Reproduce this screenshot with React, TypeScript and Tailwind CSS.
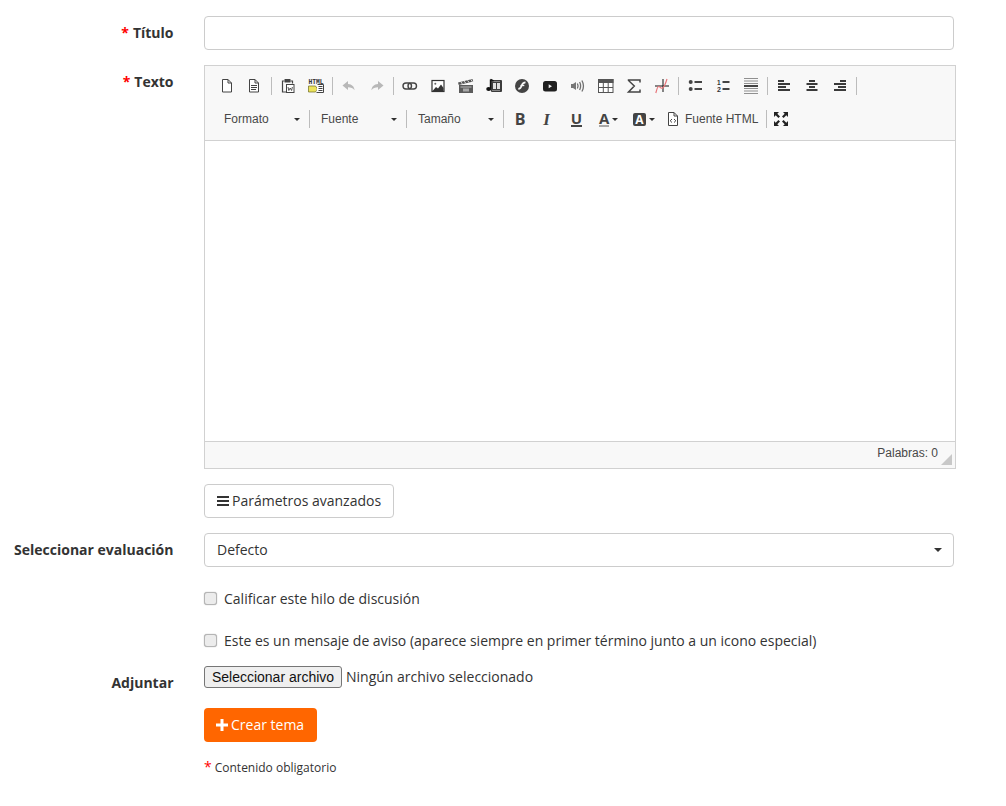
import type { ReactNode } from "react";

const sans = "font-['Open_Sans',sans-serif]";
const arial = "font-['Liberation_Sans',Arial,sans-serif]";

function Ico({ children }: { children: ReactNode }) {
  return (
    <svg width="16" height="16" viewBox="0 0 16 16" className="block overflow-visible">
      {children}
    </svg>
  );
}

function Btn({ children }: { children: ReactNode }) {
  return <div className="w-7 h-6 flex items-center justify-center shrink-0">{children}</div>;
}

function Sep() {
  return <div className="w-px h-[18px] bg-[#bcbcbc] mx-[2px] shrink-0" />;
}

function Bar({ className = "" }: { className?: string }) {
  return <div className={`w-px h-[18px] bg-[#bcbcbc] shrink-0 ${className}`} />;
}

const c = "#444";

const NewPage = () => (
  <Ico>
    <path d="M4.500 1.500h5.500l3.500 3.500v9h-9z M10 1.500v3.500h3.500" fill="#fff" stroke={c} />
  </Ico>
);
const Preview = () => (
  <Ico>
    <path d="M3.500 1.500h5.500l3.500 3.500v9h-9z M9 1.500v3.500h3.500" fill="#fff" stroke={c} />
    <path d="M5 7.500h6M5 9.500h6M5 11.500h5" stroke={c} />
  </Ico>
);
const PasteWord = () => (
  <Ico>
    <path d="M4.500 3h-2v11h4M10.500 3h2v2.500" fill="none" stroke={c} strokeWidth="1.200" />
    <rect x="4.500" y="1" width="6" height="3.500" rx=".5" fill={c} />
    <rect x="6.500" y="6.500" width="7.500" height="8" fill="#fff" stroke={c} />
    <path d="M8 9l.8 3.500L10.200 10l1.400 2.500.8-3.500" fill="none" stroke={c} strokeWidth=".9" />
  </Ico>
);
const HtmlPaste = () => (
  <Ico>
    <text x=".4" y="6" textLength="15.200" lengthAdjust="spacingAndGlyphs" fontFamily="'Liberation Mono',monospace" fontSize="7" fontWeight="700" fill="#333">HTML</text>
    <path d="M.5 8h7l2 3-2 3h-7z" fill="#ece35c" stroke="#6f6a20" strokeWidth=".7" />
    <path d="M9.500 6.500h6v8h-7" fill="#fff" stroke={c} />
    <path d="M10.500 8.500h4M10.500 10.500h4M10.500 12.500h4" stroke={c} />
  </Ico>
);
const Undo = ({ flip }: { flip?: boolean }) => (
  <svg width="16" height="16" viewBox="0 0 16 16" className={flip ? "block -scale-x-100" : "block"}>
    <path d="M7 3L1.500 7.500 7 12V9.300c3 0 5 .8 6.500 3 0-3.500-2.500-6-6.500-6.300z" fill="#b8b8b8" />
  </svg>
);
const Link = () => (
  <Ico>
    <rect x="1" y="5" width="8.500" height="6" rx="3" fill="none" stroke="#444" strokeWidth="1.400" />
    <rect x="6" y="5" width="8.500" height="6" rx="3" fill="none" stroke="#444" strokeWidth="1.400" />
  </Ico>
);
const Picture = () => (
  <Ico>
    <rect x="2" y="2.500" width="12" height="11" fill="#fff" stroke="#333" strokeWidth="1.200" />
    <circle cx="5.300" cy="5.800" r="1" fill="#666" />
    <path d="M2.500 13l3.500-4 2 1.500 3-4 2.500 3.500v3z" fill="#333" />
  </Ico>
);
const Clapper = () => (
  <Ico>
    <path d="M0 4.500l14.500-3.500.7 2.600-14.500 3.500z" fill="#555" />
    <path d="M3 4l1.500 2.200M6.300 3.200l1.500 2.200M9.600 2.400l1.500 2.200M12.900 1.600l1.500 2.200" stroke="#ddd" />
    <rect x="1" y="7" width="14" height="8" fill="#5c5c5c" />
    <path d="M2.500 9h11" stroke="#bbb" />
    <rect x="5" y="10.500" width="6" height="3" fill="#a8a8a8" />
  </Ico>
);
const Audio = () => (
  <Ico>
    <rect x="5" y="2" width="11" height="12" rx="1" fill="#3c3c3c" />
    <path d="M6.500 3.500h8M6.500 12.500h8" stroke="#ccc" strokeDasharray="1 1" />
    <rect x="7" y="5" width="3" height="6" fill="#ddd" />
    <rect x="11" y="5" width="3" height="6" fill="#ddd" />
    <path d="M4.500 1.500v9" stroke="#111" strokeWidth="1.400" />
    <path d="M4.500 1.500l3 1.500" stroke="#111" strokeWidth="1.600" />
    <ellipse cx="2.700" cy="11" rx="2.500" ry="2" fill="#111" />
  </Ico>
);
const Flash = () => (
  <Ico>
    <circle cx="8" cy="8" r="7" fill="#444" />
    <path d="M11.500 4.300c-2.800 0-3.300 1.500-3.900 3.400-.5 1.700-1.100 3-3.300 3.100" fill="none" stroke="#f8f8f8" strokeWidth="1.700" />
    <path d="M6.500 7.500h3.800" stroke="#f8f8f8" strokeWidth="1.300" />
  </Ico>
);
const Youtube = () => (
  <Ico>
    <rect x="1" y="3" width="14" height="10.500" rx="2.500" fill="#1f1f1f" />
    <path d="M6.700 6.200l3.300 2-3.300 2z" fill="#eee" />
  </Ico>
);
const Speaker = () => (
  <Ico>
    <path d="M1 6h2v4h-2z M3 6l3-2v8l-3-2z" fill="#777" />
    <path d="M7.400 5.500c.8 1.500.8 3.500 0 5M9.600 4c1.300 2.500 1.300 5.500 0 8M11.900 2.500c1.900 3.300 1.900 7.700 0 11" fill="none" stroke="#707070" strokeWidth="1.300" />
  </Ico>
);
const Table = () => (
  <Ico>
    <rect x=".5" y="1.500" width="14.500" height="13" fill="#fff" stroke="#555" />
    <rect x="0" y="1" width="15.500" height="4" fill="#555" />
    <path d="M5.300 5v9M10.200 5v9M1 9.500h14" stroke="#555" />
  </Ico>
);
const Sigma = () => (
  <Ico>
    <path d="M14 4.500V2H2.500v.5L8.300 8 2.500 14h11.500v-2.500" fill="none" stroke="#444" strokeWidth="1.500" />
  </Ico>
);
const Plot = () => (
  <Ico>
    <path d="M1 8h14M9 1v13" stroke="#111" />
    <path d="M1.800 15c1-3.500 1.500-6.500 3-6.500s1.700 2.700 3.700 1.500c2.500-1.500 3-5 4.500-9" fill="none" stroke="#e8757a" strokeWidth="1.200" />
  </Ico>
);
const Bullets = () => (
  <Ico>
    <circle cx="3.700" cy="4" r="2" fill={c} />
    <circle cx="3.700" cy="11" r="2" fill={c} />
    <path d="M7.500 4h7.500M7.500 11h7.500" stroke={c} strokeWidth="2" />
  </Ico>
);
const Numbers = () => (
  <Ico>
    <text x="2" y="6.500" fontFamily="'Liberation Sans',sans-serif" fontSize="6.500" fontWeight="700" fill="#333">1</text>
    <text x="2" y="14" fontFamily="'Liberation Sans',sans-serif" fontSize="7" fontWeight="700" fill="#333">2</text>
    <path d="M7.500 4h7M7.500 11h7" stroke={c} strokeWidth="2" />
  </Ico>
);
const HLine = () => (
  <Ico>
    <path d="M1 .5h14M1 3h14M1 5.500h14M1 10.500h14M1 13h14M1 15.500h14" stroke="#909090" />
    <path d="M1 8h14" stroke="#444" strokeWidth="2" />
  </Ico>
);
const Align = ({ rows }: { rows: string }) => (
  <Ico>
    <path d={rows} stroke="#3a3a3a" strokeWidth="2" />
  </Ico>
);
const ChevronSmall = () => <span className="w-0 h-0 border-x-[3px] border-x-transparent border-t-[3px] border-t-[#2f2f2f] shrink-0" />;

function Combo({ label, className }: { label: string; className: string }) {
  return (
    <div className={`${className} h-6 flex items-center justify-between pr-[9px] shrink-0`}>
      <span className="text-[#484848]">{label}</span>
      <ChevronSmall />
    </div>
  );
}

function Label({ children, star }: { children: ReactNode; star?: boolean }) {
  return (
    <div className="w-[173.5px] shrink-0 text-right font-bold text-[14px] leading-[20px] text-[#333]">
      {star && <span className="text-[#f00] mr-[4px]">*</span>}
      {children}
    </div>
  );
}

export default function App() {
  return (
    <div className={`${sans} text-[14px] leading-[20px] text-[#333] bg-white min-h-[806px] w-[1006px] pt-4`}>
      {/* Titulo */}
      <div className="flex gap-[30.5px]">
        <div className="pt-[7px]">
          <Label star>Título</Label>
        </div>
        <input className="w-[750px] h-[34px] border border-[#ccc] rounded-[4px] bg-white" />
      </div>

      {/* Texto */}
      <div className="flex gap-[30.5px] mt-[15px]">
        <div className="pt-[7px]">
          <Label star>Texto</Label>
        </div>
        <div className="w-[752px] h-[404px] border border-[#d1d1d1] flex flex-col">
          <div className={`${arial} text-[12px] leading-none h-[75px] shrink-0 bg-[#f8f8f8] border-b border-[#d1d1d1] pl-[7px] pt-2`}>
            <div className="flex items-center h-6">
              <Btn><NewPage /></Btn>
              <Btn><Preview /></Btn>
              <Bar className="ml-[3px] mr-[2px]" />
              <Btn><PasteWord /></Btn>
              <Btn><HtmlPaste /></Btn>
              <Sep />
              <Btn><Undo /></Btn>
              <Btn><Undo flip /></Btn>
              <Sep />
              <Btn><Link /></Btn>
              <Btn><Picture /></Btn>
              <Btn><Clapper /></Btn>
              <Btn><Audio /></Btn>
              <Btn><Flash /></Btn>
              <Btn><Youtube /></Btn>
              <Btn><Speaker /></Btn>
              <Btn><Table /></Btn>
              <Btn><Sigma /></Btn>
              <Btn><Plot /></Btn>
              <Sep />
              <Btn><Bullets /></Btn>
              <Btn><Numbers /></Btn>
              <Btn><HLine /></Btn>
              <Sep />
              <Btn><Align rows="M2 3h6M2 6h12M2 9h8M2 12h12" /></Btn>
              <Btn><Align rows="M5 3h6M2.500 6h11M5 9h6M2.500 12h11" /></Btn>
              <Btn><Align rows="M8 3h6M2 6h12M6 9h8M2 12h12" /></Btn>
              <Sep />
            </div>
            <div className="flex items-center h-6 mt-[9px]">
              <Combo label="Formato" className="w-[97px] pl-[12px]" />
              <Bar />
              <Combo label="Fuente" className="w-[96px] pl-[11px]" />
              <Bar />
              <Combo label="Tamaño" className="w-[96px] pl-[11px]" />
              <Bar />
              <div className={`${sans} w-[32px] text-center font-bold text-[16px] text-[#444] shrink-0`}>B</div>
              <div className="w-[21px] text-center font-['Liberation_Serif',serif] italic font-bold text-[17px] text-[#444] shrink-0">I</div>
              <div className={`${sans} w-[39px] flex justify-center shrink-0`}>
                <span className="font-bold text-[15px] leading-[14px] text-[#444] border-b-2 border-[#444]">U</span>
              </div>
              <div className="w-[29px] pl-[3px] flex items-center gap-[3px] shrink-0">
                <span className={`${sans} font-bold text-[15px] text-[#444] border-b-2 border-[#a8a8a8] leading-[14px]`}>A</span>
                <ChevronSmall />
              </div>
              <div className="w-[40px] pl-[8px] flex items-center gap-[3px] shrink-0">
                <span className={`${sans} w-[13px] h-[13px] rounded-[2px] bg-[#444] text-white font-bold text-[12px] leading-[13px] text-center`}>A</span>
                <ChevronSmall />
              </div>
              <div className="flex items-center gap-[4px] shrink-0">
                <Ico>
                  <path d="M3.500 1.500h5.500l3.500 3.500v9.500h-9z M9 1.500v3.500h3.500" fill="#fff" stroke={c} />
                  <path d="M7 8l-1.800 1.800L7 11.500M9 8l1.800 1.800L9 11.500" fill="none" stroke={c} />
                </Ico>
                <span className="text-[#484848] text-[12px]">Fuente HTML</span>
              </div>
              <Bar className="ml-[8px]" />
              <Btn>
                <Ico>
                  <path d="M1 1h5L4.300 2.700 7 5.400 5.400 7 2.700 4.300 1 6z M15 1v5l-1.700-1.700L10.600 7 9 5.400l2.700-2.700L10 1z M1 15v-5l1.700 1.700L5.400 9 7 10.600l-2.700 2.700L6 15z M15 15h-5l1.700-1.700L9 10.600 10.600 9l2.700 2.700L15 10z" fill="#222" />
                </Ico>
              </Btn>
            </div>
          </div>
          <div className="flex-1 bg-white" />
          <div className={`${arial} text-[12px] h-[27px] shrink-0 bg-[#f8f8f8] border-t border-[#d1d1d1] relative flex items-center justify-end pr-[17px] pb-[5px] text-[#484848]`}>
            Palabras: 0
            <span className="absolute right-[3px] bottom-[3px] w-0 h-0 border-l-[11px] border-l-transparent border-b-[11px] border-b-[#c8c8c8]" />
          </div>
        </div>
      </div>

      {/* Parametros */}
      <div className="ml-[204px] mt-[15px]">
        <button className="h-[34px] px-3 border border-[#ccc] rounded-[4px] bg-white text-[#333] flex items-center gap-[3px]">
          <span className="flex flex-col gap-[2px] w-[12px]">
            <span className="h-[2px] bg-[#333]" />
            <span className="h-[2px] bg-[#333]" />
            <span className="h-[2px] bg-[#333]" />
          </span>
          Parámetros avanzados
        </button>
      </div>

      {/* Evaluacion */}
      <div className="flex gap-[30.5px] mt-[15px]">
        <div className="pt-[7px]">
          <Label>Seleccionar evaluación</Label>
        </div>
        <div className="relative w-[750px]">
          <select className="w-full h-[34px] appearance-none border border-[#ccc] rounded-[4px] bg-white px-3 text-[14px] text-[#333]">
            <option>Defecto</option>
          </select>
          <span className="absolute right-[12px] top-[15px] w-0 h-0 border-x-4 border-x-transparent border-t-4 border-t-[#333]" />
        </div>
      </div>

      {/* Checks */}
      <div className="ml-[204px] mt-[22px] flex items-center gap-[7px] h-5">
        <input type="checkbox" className="appearance-none w-[13px] h-[13px] mb-[2px] border border-[#b5b5b5] rounded-[3px] bg-[#ececec] shadow-[0_0_1px_#999]" />
        <span>Calificar este hilo de discusión</span>
      </div>
      <div className="ml-[204px] mt-[22px] flex items-center gap-[7px] h-5">
        <input type="checkbox" className="appearance-none w-[13px] h-[13px] mb-[2px] border border-[#b5b5b5] rounded-[3px] bg-[#ececec] shadow-[0_0_1px_#999]" />
        <span>Este es un mensaje de aviso (aparece siempre en primer término junto a un icono especial)</span>
      </div>

      {/* Adjuntar */}
      <div className="flex gap-[30.5px] mt-[15px]">
        <div className="pt-[7px]">
          <Label>Adjuntar</Label>
        </div>
        <div className="flex items-center h-[22px] gap-[4px]">
          <button className={`${arial} w-[138px] h-[22px] border border-[#767676] rounded-[3px] bg-[#efefef] text-[14px] leading-none text-[#111]`}>
            Seleccionar archivo
          </button>
          <span>Ningún archivo seleccionado</span>
        </div>
      </div>

      <div className="ml-[204px] mt-[15px]">
        <button className="h-[34px] w-[113px] pl-3 rounded-[4px] bg-[#ff6600] text-white flex items-center gap-[3px]">
          <svg width="12" height="12" viewBox="0 0 12 12" className="block">
            <path d="M4.500 0h3v4.500H12v3H7.500V12h-3V7.500H0v-3h4.500z" fill="#fff" />
          </svg>
          Crear tema
        </button>
      </div>

      <div className="ml-[204px] mt-[15px] text-[12px] leading-[20px] flex items-baseline">
        <span className="text-[#f00] text-[14px] mr-[3px]">*</span>
        Contenido obligatorio
      </div>
    </div>
  );
}
